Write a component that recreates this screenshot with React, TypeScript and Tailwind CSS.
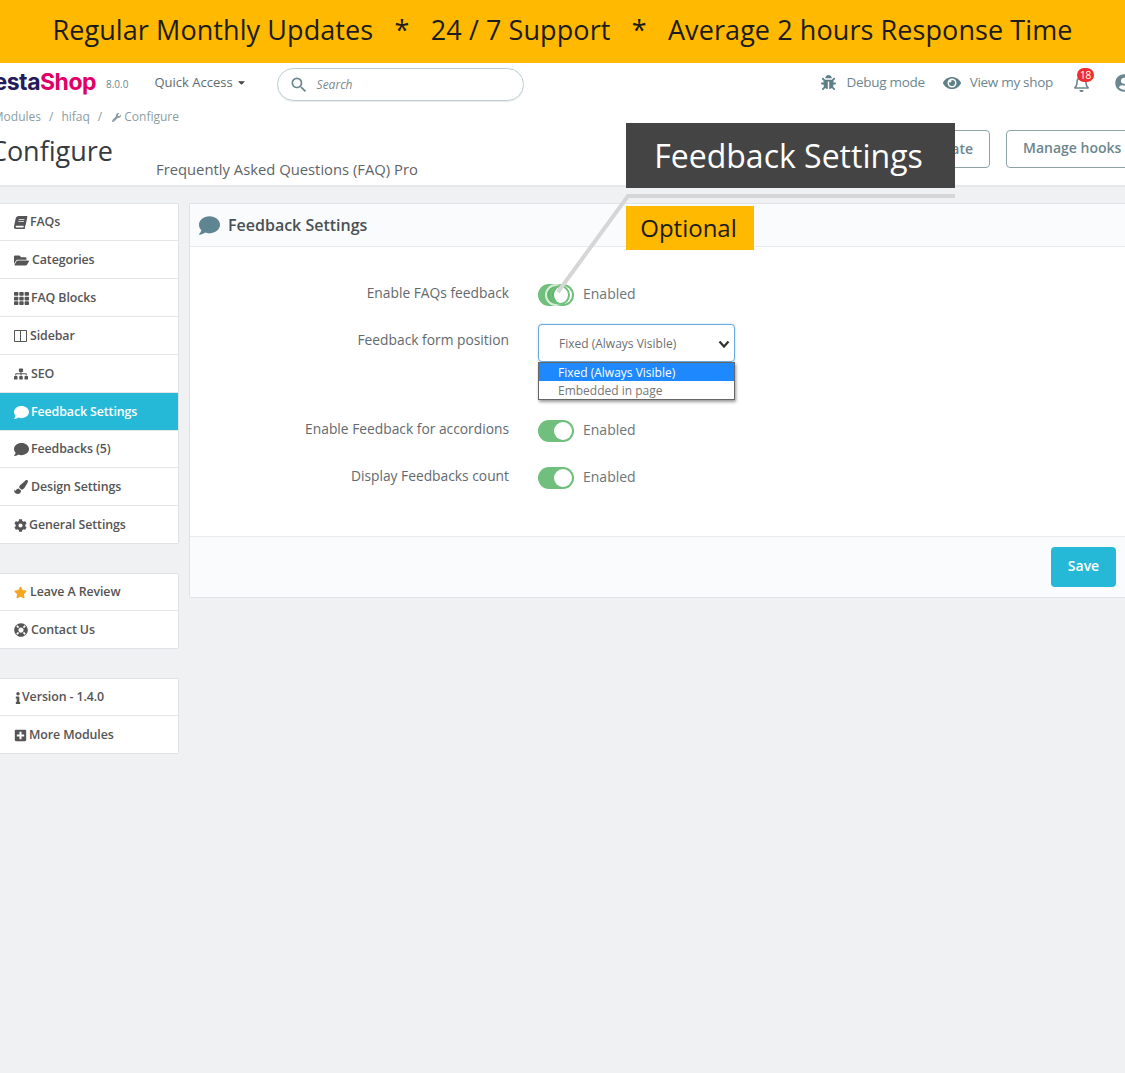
import React from 'react';
import {
  FaBook, FaFolderOpen, FaTh, FaSitemap, FaComment, FaPaintBrush, FaCog,
  FaStar, FaLifeRing, FaInfo, FaPlusSquare, FaWrench, FaBug, FaEye, FaRegBell, FaUserCircle, FaCaretDown,
} from 'react-icons/fa';
import { MdSearch } from 'react-icons/md';

const ColumnsIcon = () => (
  <svg width="13" height="12" viewBox="0 0 13 12">
    <path d="M0.5 0.5 H12.5 V11.5 H0.5 Z M6.5 0.5 V11.5" fill="none" stroke="#555" strokeWidth="1" />
  </svg>
);

const menu = [
  { icon: <FaBook className="-skew-x-12" />, w: 'w-[16px]', label: 'FAQs', h: 'h-[37px]' },
  { icon: <FaFolderOpen className="text-[15px]" />, w: 'w-[18px]', label: 'Categories', h: 'h-[38px]' },
  { icon: <FaTh className="text-[15px]" />, w: 'w-[17px]', label: 'FAQ Blocks', h: 'h-[38px]' },
  { icon: <ColumnsIcon />, w: 'w-[16px]', label: 'Sidebar', h: 'h-[38px]' },
  { icon: <FaSitemap className="text-[14px]" />, w: 'w-[17px]', label: 'SEO', h: 'h-[38px]' },
  { icon: <FaComment className="text-[15px]" />, w: 'w-[17px]', label: 'Feedback Settings', h: 'h-[38px]', active: true },
  { icon: <FaComment className="text-[15px]" />, w: 'w-[17px]', label: 'Feedbacks (5)', h: 'h-[37px]' },
  { icon: <FaPaintBrush className="text-[14px]" />, w: 'w-[17px]', label: 'Design Settings', h: 'h-[38px]' },
  { icon: <FaCog />, w: 'w-[15px]', label: 'General Settings', h: 'h-[37px]' },
];

const support = [
  { icon: <FaStar className="text-[#f5a623]" />, w: 'w-[16px]', label: 'Leave A Review', h: 'h-[37px]' },
  { icon: <FaLifeRing className="text-[14px]" />, w: 'w-[17px]', label: 'Contact Us', h: 'h-[37px]' },
];

const about = [
  { icon: <FaInfo className="text-[12px] -ml-[2px]" />, w: 'w-[8px]', label: 'Version - 1.4.0', h: 'h-[37px]' },
  { icon: <FaPlusSquare />, w: 'w-[15px]', label: 'More Modules', h: 'h-[37px]' },
];

type Item = { icon: React.ReactNode; w: string; label: string; h: string; active?: boolean };

const MenuGroup = ({ items }: { items: Item[] }) => (
  <div className="w-[179px] bg-white border-r border-b border-t border-[#dfe3e6] rounded-r-[2px]">
    {items.map((item, index) => (
      <div
        key={index}
        className={`${item.h} flex items-center pl-[14px] pt-[1px] text-[12.4px] font-semibold tracking-[-0.1px] ${
          item.active ? 'bg-[#25b9d7] text-white' : 'text-[#555]'
        } ${index < items.length - 1 ? 'border-b border-[#e4e7e9]' : ''}`}
      >
        <span className={`text-[13px] shrink-0 ${item.w}`}>{item.icon}</span>
        <span>{item.label}</span>
      </div>
    ))}
  </div>
);

const Toggle = ({ ghost }: { ghost?: boolean }) => (
  <div className="flex items-center gap-[9px]">
    <div className="relative w-[36px] h-[22px] rounded-full bg-[#70bf7c]">
      {ghost && <div className="absolute left-[7px] top-0 w-[22px] h-[22px] rounded-full bg-[#63b870] border-2 border-[#d8eedb]" />}
      <div className="absolute right-[2px] top-[2px] w-[18px] h-[18px] rounded-full bg-white" />
      {ghost && <div className="absolute left-[12px] top-[1px] w-[20px] h-[20px] rounded-full border-2 border-[#70bf7c]" />}
    </div>
    <span className="pb-[2px] text-[14px] text-[#6c757a]">Enabled</span>
  </div>
);

const FormRow = ({ label, className, children }: { label: string; className: string; children: React.ReactNode }) => (
  <div className={`flex ${className}`}>
    <div className="w-[319px] text-right text-[13.8px] text-[#63696e]">{label}</div>
    <div className="ml-[29px]">{children}</div>
  </div>
);

export default function App() {
  return (
    <div className="relative w-[1125px] h-[1073px] overflow-hidden bg-[#eff1f3] font-['Open_Sans',sans-serif]">
      <div className="h-[63px] pb-[3px] bg-[#ffb900] flex items-center justify-center text-[27px] tracking-[0.08px] text-[#1c1c1c] whitespace-pre">
        Regular Monthly Updates{'   '}*{'   '}24 / 7 Support{'   '}*{'   '}Average 2 hours Response Time
      </div>

      <header className="h-[124px] bg-white border-b-2 border-[#e6e8ea]">
        <div className="h-[41px] flex items-center pb-[2px] text-[#6c868e]">
          <div className="w-[96px] flex justify-end overflow-hidden">
            <span className="whitespace-nowrap text-[23px] font-bold font-['Inter',sans-serif] tracking-[-0.5px]">
              <span className="text-[#251b5b]">Presta</span>
              <span className="text-[#df0067]">Shop</span>
            </span>
          </div>
          <span className="ml-[10px] mt-[3px] text-[10px] text-[#6c868e]">8.0.0</span>
          <span className="ml-[26px] flex items-center gap-[3px] text-[13px] text-[#5c6b70]">
            Quick Access <FaCaretDown className="text-[11px] text-[#444]" />
          </span>
          <div className="ml-[30px] mt-[4px] w-[247px] h-[33px] rounded-[17px] border border-[#bbcdd2] flex items-center pl-[11px] shadow-[0_1px_1px_rgba(0,0,0,0.08)]">
            <MdSearch className="text-[#6c868e] text-[20px]" />
            <span className="ml-[8px] text-[12px] italic text-[#7b8a8e]">Search</span>
          </div>
          <div className="ml-auto flex items-center text-[13.5px] text-[#6c868e] tracking-[-0.3px]">
            <FaBug className="text-[#5d7f88] text-[15px]" />
            <span className="ml-[11px]">Debug mode</span>
            <FaEye className="ml-[18px] text-[#5d7f88] text-[18px]" />
            <span className="ml-[9px]">View my shop</span>
            <div className="relative ml-[20px] w-[16px] h-[20px]">
              <FaRegBell className="text-[#6c868e] text-[17px] mt-[2px]" />
              <span className="absolute -top-[5px] left-[4px] w-[17px] h-[14px] rounded-full bg-[#ee2f2f] text-white text-[10px] leading-[14px] text-center">18</span>
            </div>
            <FaUserCircle className="ml-[26px] -mr-[8px] text-[#6c868e] text-[18px]" />
          </div>
        </div>

        <div className="h-[26px] flex items-center text-[12px] text-[#8b9da2]">
          <div className="w-[41px] flex justify-end overflow-hidden">
            <span className="whitespace-nowrap">Modules</span>
          </div>
          <span className="ml-[8px]">/</span>
          <span className="ml-[8px]">hifaq</span>
          <span className="ml-[8px]">/</span>
          <FaWrench className="ml-[10px] mr-[3px] text-[9px]" />
          <span>Configure</span>
        </div>

        <div className="relative flex">
          <div className="w-[113px] flex justify-end overflow-hidden h-[44px]">
            <span className="whitespace-nowrap text-[27px] leading-[42px] text-[#363a41]">Configure</span>
          </div>
          <span className="ml-[43px] mt-[29px] text-[14.8px] leading-[20px] text-[#5f6468] whitespace-nowrap">
            Frequently Asked Questions (FAQ) Pro
          </span>
          <div className="absolute right-[-10px] top-0 flex gap-[16px]">
            <button className="w-[100px] h-[38px] rounded-[4px] border border-[#8fa2a8] text-right pr-[16px] pb-[2px] text-[14px] font-semibold text-[#6c868e]">
              Translate
            </button>
            <button className="w-[129px] h-[38px] rounded-[4px] border border-[#8fa2a8] text-left pl-[16px] pb-[4px] text-[14px] font-semibold text-[#6c868e] whitespace-nowrap">
              Manage hooks
            </button>
          </div>
        </div>
      </header>

      <main className="flex items-start pt-[16px]">
        <aside className="w-[190px] shrink-0 flex flex-col gap-[29px]">
          <MenuGroup items={menu} />
          <MenuGroup items={support} />
          <MenuGroup items={about} />
        </aside>

        <section className="flex-1 -ml-[1px] h-[395px] bg-white border-t border-b border-l border-[#dfe3e6] rounded-l-[2px] flex flex-col">
          <div className="h-[43px] shrink-0 flex items-center gap-[8px] pl-[9px] bg-[#fafbfc] border-b border-[#e8eaec] text-[16px] font-semibold text-[#4a5155]">
            <FaComment className="text-[#5f8592] text-[21px]" />
            Feedback Settings
          </div>

          <div className="relative flex-1 pt-[36px]">
            <FormRow label="Enable FAQs feedback" className="h-[47px]">
              <Toggle ghost />
            </FormRow>
            <FormRow label="Feedback form position" className="h-[89px]">
              <div className="relative w-[197px] h-[38px] -mt-[6px] pt-[2px] rounded-[4px] border border-[#6aa9e0] bg-white flex items-center pl-[20px] text-[12px] text-[#6c6f72] shadow-[0_0_2px_rgba(106,169,224,0.6)]">
                Fixed (Always Visible)
                <svg className="absolute right-[4px] top-[15px]" width="12" height="9" viewBox="0 0 12 9">
                  <path d="M1.5 1.5 L6 6.5 L10.5 1.5" fill="none" stroke="#333" strokeWidth="2.2" />
                </svg>
                <div className="absolute left-[-1px] top-[37px] w-[197px] h-[38px] z-10 bg-white border border-[#666] shadow-[1px_2px_3px_rgba(0,0,0,0.4)] text-[12px]">
                  <div className="h-[18px] leading-[20px] pl-[19px] bg-[#1e88ff] text-white font-medium">Fixed (Always Visible)</div>
                  <div className="h-[18px] leading-[20px] pl-[19px] text-[#777]">Embedded in page</div>
                </div>
              </div>
            </FormRow>
            <FormRow label="Enable Feedback for accordions" className="h-[47px]">
              <Toggle />
            </FormRow>
            <FormRow label="Display Feedbacks count" className="h-[47px]">
              <Toggle />
            </FormRow>
          </div>

          <div className="h-[61px] shrink-0 flex items-center justify-end pr-[9px] bg-[#fafbfc] border-t border-[#e8eaec]">
            <button className="w-[65px] h-[40px] pb-[4px] rounded-[4px] bg-[#25b9d7] text-white text-[14px] font-semibold">Save</button>
          </div>
        </section>
      </main>

      {/* callout over the screenshot */}
      <svg className="absolute left-0 top-0 pointer-events-none" width="1125" height="320">
        <path d="M955 196 H628 L558 292" fill="none" stroke="#d6d6d6" strokeWidth="4" />
      </svg>
      <div className="absolute left-[626px] top-[123px] w-[329px] h-[65px] pr-[4px] bg-[#444444] text-white text-[32px] flex items-center justify-center">
        Feedback Settings
      </div>
      <div className="absolute left-[626px] top-[206px] w-[128px] h-[44px] pr-[3px] bg-[#ffb900] text-[#1c1c1c] text-[24px] flex items-center justify-center">
        Optional
      </div>
    </div>
  );
}
